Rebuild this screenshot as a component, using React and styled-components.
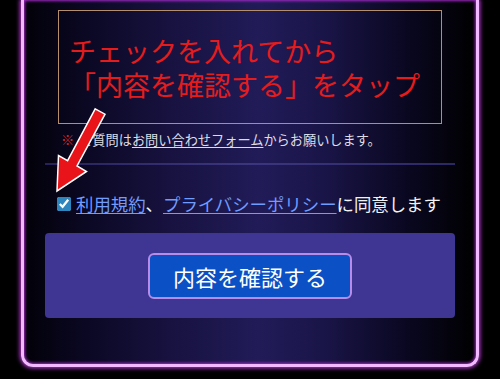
import React from "react";
import styled, { createGlobalStyle } from "styled-components";

const Global = createGlobalStyle`
  html, body { margin: 0; padding: 0; background: #000; }
  body { font-family: "Noto Sans CJK JP", "Noto Sans", sans-serif; }
  * { box-sizing: border-box; }
`;

const Page = styled.div`
  position: relative;
  width: 500px;
  height: 379px;
  overflow: hidden;
  background: #000;
  padding: 0 21px;
`;

const Frame = styled.div`
  height: 367px;
  border: 3px solid #f3b8ff;
  border-top: none;
  border-radius: 0 0 12px 12px;
  box-shadow: 0 0 4px 1px #c23ee2, inset 0 0 3px 1px #a42cc8;
  background: linear-gradient(
    90deg,
    #020108 0%,
    #0b0824 14%,
    #17123f 32%,
    #211b58 52%,
    #1a1548 66%,
    #0a0822 84%,
    #000 100%
  );
  padding: 10px 21px 0;
  display: flex;
  flex-direction: column;
`;

const Annotation = styled.div`
  margin: 0 13px;
  height: 114px;
  border: 1px solid #b58f6c;
  padding: 23px 0 0 10px;
  color: #e61c1c;
  font-size: 27px;
  line-height: 34px;
  white-space: nowrap;
`;

const Line = styled.div`
  height: 34px;
`;

const Note = styled.p`
  margin: 6px 0 0;
  padding-left: 16px;
  font-size: 13.2px;
  line-height: 20px;
  color: #dcdce4;
  white-space: nowrap;
`;

const Mark = styled.span`
  color: #d2262a;
  margin-right: 5px;
`;

const NoteLink = styled.span`
  text-decoration: underline;
  text-underline-offset: 2px;
`;

const Divider = styled.hr`
  margin: 13px 0 0;
  border: none;
  height: 2px;
  background: linear-gradient(90deg, #27235a, #3c3680 50%, #2c2864);
`;

const AgreeRow = styled.label`
  display: flex;
  align-items: center;
  gap: 5px;
  margin-top: 28px;
  padding-left: 12px;
  font-size: 17.4px;
  line-height: 22px;
  color: #f2f2f2;
  white-space: nowrap;
`;

const Check = styled.input`
  width: 14px;
  height: 14px;
  margin: 0;
  accent-color: #2d86bd;
`;

const Link = styled.span`
  color: #6f9cff;
  text-decoration: underline;
  text-underline-offset: 2px;
`;

const Panel = styled.div`
  margin-top: 18px;
  height: 85px;
  background: #3f3593;
  border-radius: 4px;
  display: flex;
  align-items: center;
  justify-content: center;
`;

const SubmitButton = styled.button`
  width: 204px;
  height: 46px;
  background: #0b50c4;
  border: 2px solid #b68ce8;
  border-radius: 6px;
  color: #fff;
  font-family: inherit;
  font-size: 22px;
  line-height: 1;
  padding: 0;
  margin-top: 1px;
`;

const ArrowSvg = styled.svg`
  position: absolute;
  left: 0;
  top: 0;
  pointer-events: none;
`;

export default function App() {
  return (
    <>
      <Global />
      <Page>
        <Frame>
          <Annotation>
            <Line>チェックを入れてから</Line>
            <Line>「内容を確認する」をタップ</Line>
          </Annotation>
          <Note>
            <Mark>※</Mark>ご質問は<NoteLink>お問い合わせフォーム</NoteLink>からお願いします。
          </Note>
          <Divider />
          <AgreeRow>
            <Check type="checkbox" checked readOnly />
            <span>
              <Link>利用規約</Link>、<Link>プライバシーポリシー</Link>に同意します
            </span>
          </AgreeRow>
          <Panel>
            <SubmitButton type="button">内容を確認する</SubmitButton>
          </Panel>
        </Frame>
        <ArrowSvg width="500" height="379" viewBox="0 0 500 379">
          <polygon
            points="95.2,108.8 105,114.2 77,166 86.5,171.5 57,191 58.5,155.5 67.6,160.6"
            fill="#e8141a"
            stroke="#ffffff"
            strokeWidth="1.5"
            strokeLinejoin="miter"
          />
        </ArrowSvg>
      </Page>
    </>
  );
}
